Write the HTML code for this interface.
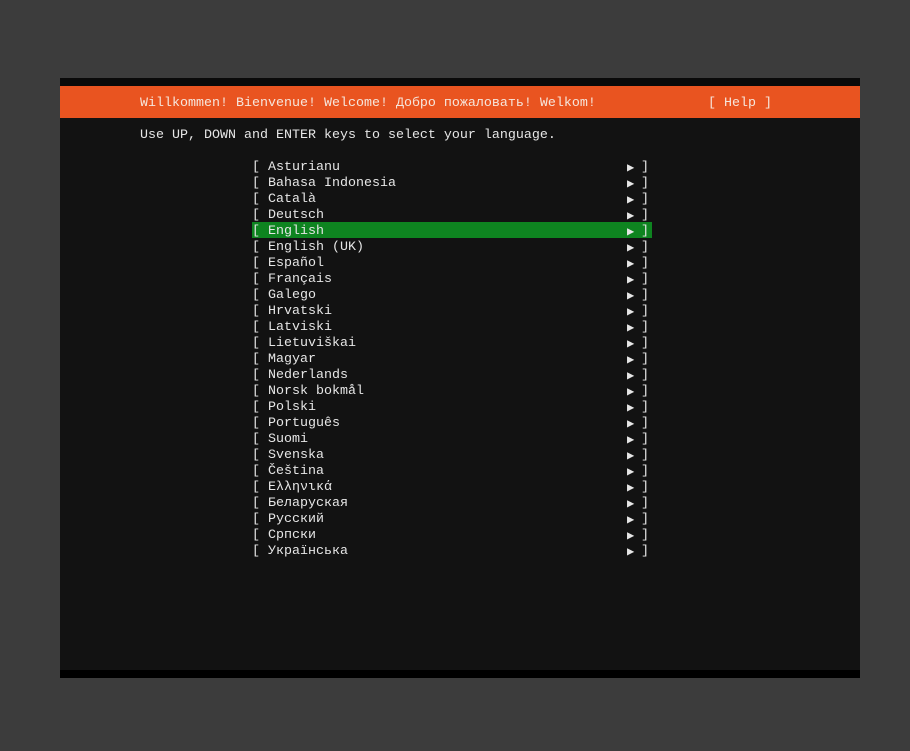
<!DOCTYPE html>
<html><head><meta charset="utf-8"><style>
body{margin:0;width:910px;height:751px;background:#3c3c3c;position:relative;overflow:hidden;font-family:"Liberation Mono","DejaVu Sans Mono",monospace;font-size:13.33px;color:#e6e6e6}
.p{position:absolute;left:60px;top:78px;width:800px;height:600px;background:#121212}
.topb{position:absolute;left:60px;top:78px;width:800px;height:8px;background:#0a0a0a}
.bar{position:absolute;left:60px;top:86px;width:800px;height:32px;background:#e95420}
.bot{position:absolute;left:60px;top:670px;width:800px;height:8px;background:#000}
.t{position:absolute;white-space:pre;line-height:16px;height:16px;padding-top:2px}
.hl{position:absolute;left:252px;top:222px;width:400px;height:16px;background:#0e8420}
</style></head><body>
<div class="p"></div><div class="topb"></div><div class="bar"></div><div class="bot"></div>
<div class="t" style="left:140px;top:94px;color:#f6e6dc">Willkommen! Bienvenue! Welcome! Добро пожаловать! Welkom!</div>
<div class="t" style="left:708px;top:94px;color:#f6e6dc">[ Help ]</div>
<div class="t" style="left:140px;top:126px">Use UP, DOWN and ENTER keys to select your language.</div>
<div class="hl"></div>
<div id="list"></div>
<script>
var L=["Asturianu","Bahasa Indonesia","Català","Deutsch","English","English (UK)","Español","Français","Galego","Hrvatski","Latviski","Lietuviškai","Magyar","Nederlands","Norsk bokmål","Polski","Português","Suomi","Svenska","Čeština","Ελληνικά","Беларуская","Русский","Српски","Українська"];
var h="";
for(var i=0;i<L.length;i++){var y=158+16*i;
h+='<div class="t" style="left:252px;top:'+y+'px">[ '+L[i]+'</div>';
h+='<div class="t" style="left:627px;top:'+y+'px;font-size:12px">▶</div>';
h+='<div class="t" style="left:641px;top:'+y+'px">]</div>';}
document.getElementById("list").innerHTML=h;
</script>
</body></html>
